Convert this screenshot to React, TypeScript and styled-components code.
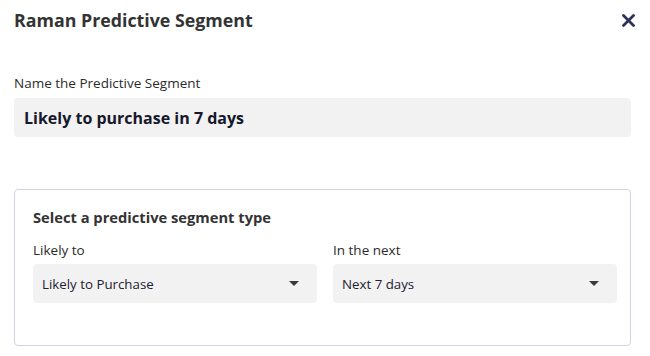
import styled, { createGlobalStyle } from 'styled-components'

const GlobalStyle = createGlobalStyle`
  body {
    margin: 0;
    background: #ffffff;
    font-family: "Open Sans", Lato, sans-serif;
  }
`

const Panel = styled.div`
  width: 650px;
  height: 356px;
  box-sizing: border-box;
  padding: 0 19px 0 14px;
  overflow: hidden;
`

const Header = styled.div`
  display: flex;
  align-items: center;
  justify-content: space-between;
  padding-top: 8px;
  height: 24px;
`

const Title = styled.h1`
  margin: 0;
  font-size: 17.8px;
  line-height: 24px;
  font-weight: 700;
  color: #333333;
`

const CloseButton = styled.button`
  display: flex;
  padding: 0;
  margin-right: -4px;
  border: 0;
  background: none;
  cursor: pointer;
`

const Label = styled.label`
  display: block;
  font-size: 13.5px;
  line-height: 18px;
  font-weight: 500;
  color: #2b2b2b;
`

const NameLabel = styled(Label)`
  margin-top: 42px;
`

const NameInput = styled.div`
  margin-top: 6px;
  height: 39px;
  display: flex;
  align-items: center;
  padding: 0 10px;
  background: #f2f2f2;
  border-radius: 4px;
  font-size: 16px;
  font-weight: 700;
  color: #16182b;
`

const Card = styled.section`
  margin-top: 52px;
  border: 1px solid #cfd5e3;
  border-radius: 4px;
  padding: 17px 13px 42px 18px;
`

const CardTitle = styled.h2`
  margin: 0;
  font-size: 14.7px;
  line-height: 20px;
  font-weight: 700;
  color: #333333;
`

const Fields = styled.div`
  display: grid;
  grid-template-columns: 1fr 1fr;
  gap: 16px;
  margin-top: 14px;
`

const Field = styled.div`
  display: flex;
  flex-direction: column;
  gap: 5px;
`

const Select = styled.div`
  height: 39px;
  display: flex;
  align-items: center;
  justify-content: space-between;
  padding: 0 18px 0 9px;
  background: #f2f2f2;
  border-radius: 4px;
  font-size: 13.3px;
  color: #1e2033;
`

const Caret = styled.span`
  width: 0;
  height: 0;
  border-left: 5px solid transparent;
  border-right: 5px solid transparent;
  border-top: 5px solid #3a3a3a;
`

function CloseIcon() {
  return (
    <svg width="13" height="13" viewBox="0 0 13 13">
      <path d="M1.5 1.5 L11.5 11.5 M11.5 1.5 L1.5 11.5" stroke="#2e3159" strokeWidth="2.8" strokeLinecap="round" />
    </svg>
  )
}

export default function App() {
  return (
    <>
      <GlobalStyle />
      <Panel>
        <Header>
          <Title>Raman Predictive Segment</Title>
          <CloseButton aria-label="Close">
            <CloseIcon />
          </CloseButton>
        </Header>

        <NameLabel>Name the Predictive Segment</NameLabel>
        <NameInput>Likely to purchase in 7 days</NameInput>

        <Card>
          <CardTitle>Select a predictive segment type</CardTitle>
          <Fields>
            <Field>
              <Label>Likely to</Label>
              <Select>
                Likely to Purchase
                <Caret />
              </Select>
            </Field>
            <Field>
              <Label>In the next</Label>
              <Select>
                Next 7 days
                <Caret />
              </Select>
            </Field>
          </Fields>
        </Card>
      </Panel>
    </>
  )
}
